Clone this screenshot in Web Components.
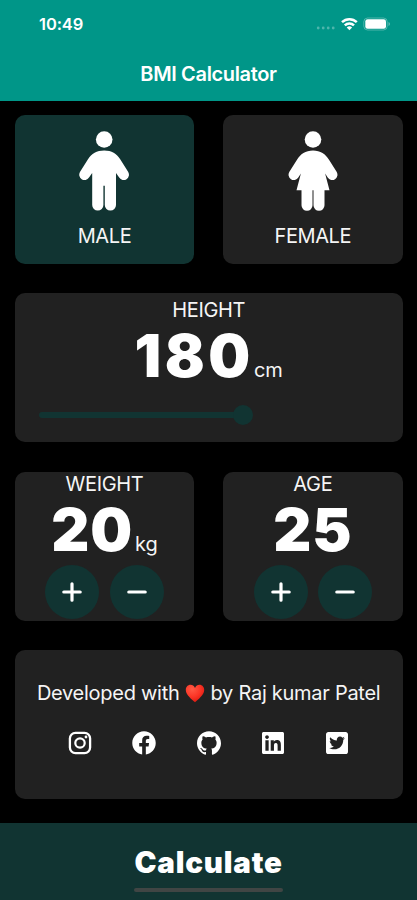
<!DOCTYPE html>
<html lang="en">
<head>
<meta charset="utf-8">
<title>BMI Calculator</title>
<style>
    body {
        margin: 0;
        background: #000;
    }
</style>
</head>
<body>
<bmi-app></bmi-app>
<script>
const define = (name, html) => {
    const template = document.createElement('template')
    template.innerHTML = html
    customElements.define(name, class extends HTMLElement {
        constructor () {
            super()
            this.attachShadow({mode: 'open'})
            this.shadowRoot.appendChild(template.content.cloneNode(true))
        }
    })
}

define('status-bar', /* HTML */`
<style>
    :host {
        display: flex;
        justify-content: space-between;
        align-items: center;
        height: 48px;
        padding: 0 26px 0 39px;
        font-size: 16.5px;
        font-weight: 600;
        letter-spacing: -0.1px;
    }
    svg { display: block; }
</style>
<span>10:49</span>
<svg width="76" height="18" viewBox="0 0 76 18" fill="#fff">
    <g opacity=".3">
        <circle cx="3.2" cy="13" r="1.4"/>
        <circle cx="8.2" cy="13" r="1.4"/>
        <circle cx="13.2" cy="13" r="1.4"/>
        <circle cx="18.2" cy="13" r="1.4"/>
    </g>
    <g fill="none" stroke="#fff" stroke-width="2.5">
        <path d="M27 7.200a10.600 10.600 0 0 1 14.800 0"/>
        <path d="M29.800 10.300a6.600 6.600 0 0 1 9.200 0"/>
    </g>
    <path d="M34.400 15.300l-2.700-2.800a3.900 3.900 0 0 1 5.400 0z"/>
    <rect x="48.800" y="3" width="23.400" height="12" rx="3.800" fill="none" stroke="#fff" stroke-opacity=".3"/>
    <rect x="50.300" y="4.200" width="20.700" height="9.600" rx="2.300"/>
    <path d="M73.600 7v4c1.500-.6 1.500-3.400 0-4z" opacity=".5"/>
</svg>
`)

define('app-header', /* HTML */`
<style>
    :host {
        display: block;
        height: 100.5px;
        background: #009688;
    }
    h1 {
        margin: 13.5px 0 0;
        font-size: 20px;
        font-weight: 600;
        line-height: 24px;
        text-align: center;
        letter-spacing: -0.35px;
    }
</style>
<status-bar></status-bar>
<h1><slot></slot></h1>
`)

define('bmi-card', /* HTML */`
<style>
    :host {
        display: flex;
        flex-direction: column;
        align-items: center;
        box-sizing: border-box;
        height: 149px;
        border-radius: 10px;
        background: #212121;
        color: #f5f5f5;
        font-size: 20px;
        line-height: 24px;
    }
    :host([active]) {
        background: #113432;
    }
    :host([wide]) {
        grid-column: 1 / -1;
    }
</style>
<slot></slot>
`)

define('gender-option', /* HTML */`
<style>
    :host {
        display: flex;
        flex-direction: column;
        align-items: center;
        gap: 13px;
        padding-top: 15px;
    }
    ::slotted(svg) {
        display: block;
        width: 52px;
        height: 81px;
        fill: #fff;
    }
    span { letter-spacing: -0.4px; }
</style>
<slot></slot>
<span><slot name="label"></slot></span>
`)

define('big-value', /* HTML */`
<style>
    :host {
        display: flex;
        flex-direction: column;
        align-items: center;
        gap: 4px;
    }
    .label { letter-spacing: -0.35px; }
    .row {
        display: flex;
        align-items: baseline;
        gap: var(--unit-gap, 2px);
    }
    .number {
        color: #fff;
        font-size: 59px;
        font-weight: 900;
        line-height: 59px;
        letter-spacing: var(--number-spacing, 0.8px);
    }
</style>
<span class="label"><slot name="label"></slot></span>
<div class="row">
    <span class="number"><slot></slot></span>
    <slot name="unit"></slot>
</div>
`)

define('height-slider', /* HTML */`
<style>
    :host {
        display: flex;
        align-items: center;
        align-self: stretch;
        height: 20px;
        margin: 19.5px 24px 0;
    }
    .track {
        width: 196px;
        height: 6px;
        border-radius: 3px 0 0 3px;
        background: #113432;
    }
    .thumb {
        width: 20px;
        height: 20px;
        margin-left: -2px;
        border-radius: 50%;
        background: #113432;
    }
</style>
<div class="track"></div>
<div class="thumb"></div>
`)

define('step-buttons', /* HTML */`
<style>
    :host {
        display: flex;
        gap: 10.2px;
        margin-top: 6.5px;
    }
    button {
        width: 54px;
        height: 54px;
        padding: 0;
        border: 0;
        border-radius: 50%;
        background: #113432;
    }
    svg {
        display: block;
        margin: auto;
        stroke: #fff;
        stroke-width: 3.2;
        stroke-linecap: round;
    }
</style>
<button aria-label="Increase"><svg width="22" height="22"><path d="M2.800 11h16.400M11 2.800v16.400"/></svg></button>
<button aria-label="Decrease"><svg width="22" height="22"><path d="M2.800 11h16.400"/></svg></button>
`)

define('credit-line', /* HTML */`
<style>
    :host {
        display: flex;
        align-items: center;
        gap: 5.5px;
        margin-top: 31px;
        white-space: nowrap;
        letter-spacing: -0.27px;
    }
</style>
<span>Developed with</span>
<svg width="20" height="19" viewBox="0 0 20 19">
    <defs>
        <radialGradient id="heart" cx=".35" cy=".25" r=".8">
            <stop offset="0" stop-color="#ff5a45"/>
            <stop offset=".55" stop-color="#fb3526"/>
            <stop offset="1" stop-color="#d9180f"/>
        </radialGradient>
    </defs>
    <path fill="url(#heart)" d="M10 18.300C7.300 15.600.8 11 .8 5.900.8 2.900 2.900.8 5.500.8 7.500.8 9.100 2 10 3.900 10.900 2 12.500.8 14.500.8c2.600 0 4.700 2.100 4.700 5.100 0 5.100-6.500 9.700-9.200 12.400z"/>
</svg>
<span>by Raj kumar Patel</span>
`)

define('social-links', /* HTML */`
<style>
    :host {
        display: grid;
        grid-template-columns: repeat(5, 64.2px);
        justify-items: center;
        margin-top: 24.7px;
    }
    svg {
        display: block;
        width: 26px;
        height: 26px;
        fill: #fff;
    }
</style>
<svg viewBox="0 0 26 26">
    <rect x="2.900" y="2.900" width="20.200" height="20.200" rx="5.600" fill="none" stroke="#fff" stroke-width="2.300"/>
    <circle cx="13" cy="13" r="4.700" fill="none" stroke="#fff" stroke-width="2.200"/>
    <circle cx="19" cy="7" r="1.400"/>
</svg>
<svg viewBox="-19 -19 550 550"><path d="M504 256C504 119 393 8 256 8S8 119 8 256c0 123.780 90.690 226.380 209.250 245V327.690h-63V256h63v-54.640c0-62.150 37-96.480 93.670-96.480 27.140 0 55.520 4.840 55.520 4.840v61h-31.280c-30.800 0-40.410 19.120-40.410 38.730V256h68.780l-11 71.690h-57.780V501C413.310 482.380 504 379.780 504 256z"/></svg>
<svg viewBox="-1 -1 26 26"><path d="M12 .297c-6.630 0-12 5.373-12 12 0 5.303 3.438 9.800 8.205 11.385.6.113.82-.258.82-.577 0-.285-.01-1.040-.015-2.040-3.338.724-4.042-1.610-4.042-1.610C4.422 18.070 3.633 17.700 3.633 17.700c-1.087-.744.084-.729.084-.729 1.205.084 1.838 1.236 1.838 1.236 1.070 1.835 2.809 1.305 3.495.998.108-.776.417-1.305.76-1.605-2.665-.3-5.466-1.332-5.466-5.930 0-1.310.465-2.380 1.235-3.220-.135-.303-.54-1.523.105-3.176 0 0 1.005-.322 3.300 1.230.96-.267 1.980-.399 3-.405 1.020.006 2.040.138 3 .405 2.280-1.552 3.285-1.230 3.285-1.230.645 1.653.24 2.873.12 3.176.765.84 1.230 1.910 1.230 3.220 0 4.610-2.805 5.625-5.475 5.920.42.36.81 1.096.81 2.220 0 1.606-.015 2.896-.015 3.286 0 .315.21.69.825.57C20.565 22.092 24 17.592 24 12.297c0-6.627-5.373-12-12-12"/></svg>
<svg viewBox="-41 -9 530 530"><path d="M416 32H31.900C14.300 32 0 46.500 0 64.300v383.400C0 465.500 14.300 480 31.900 480H416c17.600 0 32-14.500 32-32.300V64.300c0-17.800-14.400-32.300-32-32.300zM135.400 416H69V202.200h66.500V416zm-33.200-243c-21.300 0-38.500-17.300-38.500-38.500S80.900 96 102.200 96c21.200 0 38.500 17.300 38.500 38.500 0 21.300-17.200 38.500-38.500 38.500zm282.100 243h-66.400V312c0-24.800-.5-56.700-34.500-56.700-34.600 0-39.900 27-39.900 54.900V416h-66.400V202.200h63.700v29.200h.9c8.900-16.800 30.600-34.500 62.900-34.500 67.200 0 79.700 44.300 79.700 101.900V416z"/></svg>
<svg viewBox="-41 -9 530 530"><path d="M400 32H48C21.500 32 0 53.500 0 80v352c0 26.500 21.500 48 48 48h352c26.500 0 48-21.500 48-48V80c0-26.500-21.500-48-48-48zm-48.900 158.800c.2 2.800.2 5.700.2 8.500 0 86.700-66 186.600-186.600 186.600-37.200 0-71.700-10.800-100.700-29.400 5.300.6 10.400.8 15.800.8 30.700 0 58.900-10.400 81.400-28-28.800-.6-53-19.500-61.300-45.500 10.100 1.500 19.200 1.500 29.600-1.200-30-6.100-52.500-32.500-52.500-64.400v-.8c8.700 4.900 18.900 7.900 29.600 8.300a65.447 65.447 0 0 1-29.200-54.600c0-12.200 3.200-23.400 8.900-33.100 32.300 39.800 80.800 65.800 135.200 68.600-9.300-44.500 24-80.600 64-80.600 18.900 0 35.900 7.900 47.900 20.700 14.800-2.800 29-8.300 41.600-15.800-4.900 15.200-15.200 28-28.800 36.100 13.200-1.400 26-5.100 37.800-10.200-8.900 13.100-20.100 24.700-32.900 34z"/></svg>
`)

define('calculate-bar', /* HTML */`
<style>
    :host {
        display: flex;
        flex-direction: column;
        align-items: center;
        box-sizing: border-box;
        height: 77.5px;
        padding-top: 21px;
        background: #113432;
        font-size: 29.5px;
        font-weight: 900;
        line-height: 36px;
        letter-spacing: 0.8px;
    }
    .home {
        width: 149px;
        height: 4px;
        margin-top: 8.5px;
        border-radius: 2px;
        background: #404544;
    }
</style>
<slot></slot>
<div class="home"></div>
`)

define('bmi-app', /* HTML */`
<style>
    :host {
        display: flex;
        flex-direction: column;
        width: 417px;
        height: 900px;
        overflow: hidden;
        background: #000;
        color: #fff;
        font-family: Inter, "Liberation Sans", sans-serif;
    }
    main {
        flex: 1;
        display: grid;
        grid-template-columns: 1fr 1fr;
        align-content: start;
        gap: 29.4px 29px;
        padding: 14.5px 14.5px 0 14.8px;
    }
    .tall {
        padding-top: 5px;
        --number-spacing: 3.6px;
        --unit-gap: 0;
    }
</style>
<app-header>BMI Calculator</app-header>
<main>
    <bmi-card active>
        <gender-option>
            <svg viewBox="0 0 52 81">
                <circle cx="26.200" cy="9.500" r="8.300"/>
                <path d="M26.200 20.500c7.500 0 12.400 2.800 16 8.800l7.900 12.500a5.300 5.300 0 0 1-8.900 5.800l-3.200-4.700V75a5.600 5.600 0 0 1-11.200 0V55.800h-1.400V75a5.600 5.600 0 0 1-11.200 0V42.900L11 47.600a5.300 5.300 0 0 1-8.900-5.800L10 29.300c3.600-6 8.700-8.800 16.200-8.800z"/>
            </svg>
            <span slot="label">MALE</span>
        </gender-option>
    </bmi-card>
    <bmi-card>
        <gender-option>
            <svg viewBox="0 0 52 81">
                <circle cx="26" cy="9.500" r="8.300"/>
                <path d="M26 20.500c7.500 0 12.600 3.600 16 9.200l7.600 12.100a5.300 5.300 0 0 1-8.900 5.800l-2.600-4.100 4.400 16.800h-5V75.300a5.500 5.500 0 0 1-11 0V60.300h-1V75.300a5.500 5.500 0 0 1-11 0V60.300h-5l4.400-16.800-2.600 4.100a5.300 5.300 0 0 1-8.900-5.800L10 29.700c3.400-5.600 8.500-9.200 16-9.200z"/>
            </svg>
            <span slot="label">FEMALE</span>
        </gender-option>
    </bmi-card>
    <bmi-card wide class="tall">
        <big-value><span slot="label">HEIGHT</span>180<span slot="unit">cm</span></big-value>
        <height-slider></height-slider>
    </bmi-card>
    <bmi-card>
        <big-value><span slot="label">WEIGHT</span>20<span slot="unit">kg</span></big-value>
        <step-buttons></step-buttons>
    </bmi-card>
    <bmi-card>
        <big-value><span slot="label">AGE</span>25</big-value>
        <step-buttons></step-buttons>
    </bmi-card>
    <bmi-card wide>
        <credit-line></credit-line>
        <social-links></social-links>
    </bmi-card>
</main>
<calculate-bar>Calculate</calculate-bar>
`)
</script>
</body>
</html>
